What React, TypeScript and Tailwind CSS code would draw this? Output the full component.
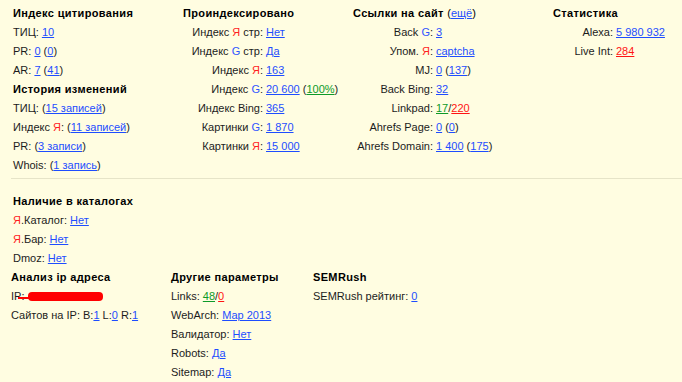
import React from 'react';

const Y = () => <span className="text-[#ff1f1f]">Я</span>;
const G = () => <span className="text-[#2f55ff]">G</span>;
const L = ({ children, c = 'blue' }: { children: React.ReactNode; c?: 'blue' | 'green' | 'red' }) => (
  <a
    href="#"
    className={
      c === 'green'
        ? 'text-[#0d9a28] underline'
        : c === 'red'
        ? 'text-[#ff1414] underline'
        : 'text-[#1e4dff] underline'
    }
  >
    {children}
  </a>
);

const Row = ({ children }: { children: React.ReactNode }) => (
  <div className="h-[19px] leading-[19px] whitespace-nowrap">{children}</div>
);
const H = ({ children }: { children: React.ReactNode }) => (
  <div className="h-[19px] leading-[19px] font-bold tracking-[0.35px] text-black whitespace-nowrap">{children}</div>
);

const KV = ({ w, label, children }: { w: string; label: React.ReactNode; children: React.ReactNode }) => (
  <div className="flex h-[19px] leading-[19px] whitespace-nowrap">
    <div className={`${w} text-right shrink-0`}>{label}</div>
    <div className="pl-[3px]">{children}</div>
  </div>
);

export default function App() {
  return (
    <div
      className="w-[682px] h-[382px] overflow-hidden bg-[#fffde1] text-[#1c1c1c] text-[11px]"
      style={{ fontFamily: '"Liberation Sans", Arial, sans-serif' }}
    >
      <div className="flex pt-[4px] pl-[13px]">
        <div className="w-[170px]">
          <H>Индекс цитирования</H>
          <Row>ТИЦ: <L>10</L></Row>
          <Row>PR: <L>0</L> (<L>0</L>)</Row>
          <Row>AR: <L>7</L> (<L>41</L>)</Row>
          <H>История изменений</H>
          <Row>ТИЦ: (<L>15 записей</L>)</Row>
          <Row>Индекс <Y />: (<L>11 записей</L>)</Row>
          <Row>PR: (<L>3 записи</L>)</Row>
          <Row>Whois: (<L>1 запись</L>)</Row>
        </div>
        <div className="w-[170px]">
          <H>Проиндексировано</H>
          <KV w="w-[80px]" label={<>Индекс <Y /> стр:</>}><L>Нет</L></KV>
          <KV w="w-[80px]" label={<>Индекс <G /> стр:</>}><L>Да</L></KV>
          <KV w="w-[80px]" label={<>Индекс <Y />:</>}><L>163</L></KV>
          <KV w="w-[80px]" label={<>Индекс <G />:</>}><L>20 600</L> (<L c="green">100%</L>)</KV>
          <KV w="w-[80px]" label="Индекс Bing:"><L>365</L></KV>
          <KV w="w-[80px]" label={<>Картинки <G />:</>}><L>1 870</L></KV>
          <KV w="w-[80px]" label={<>Картинки <Y />:</>}><L>15 000</L></KV>
        </div>
        <div className="w-[200px]">
          <H>Ссылки на сайт <span className="font-normal tracking-normal">(<L>ещё</L>)</span></H>
          <KV w="w-[80px]" label={<>Back <G />:</>}><L>3</L></KV>
          <KV w="w-[80px]" label={<>Упом. <Y />:</>}><L>captcha</L></KV>
          <KV w="w-[80px]" label="MJ:"><L>0</L> (<L>137</L>)</KV>
          <KV w="w-[80px]" label="Back Bing:"><L>32</L></KV>
          <KV w="w-[80px]" label="Linkpad:"><L c="green">17</L>/<L c="red">220</L></KV>
          <KV w="w-[80px]" label="Ahrefs Page:"><L>0</L> (<L>0</L>)</KV>
          <KV w="w-[80px]" label="Ahrefs Domain:"><L>1 400</L> (<L>175</L>)</KV>
        </div>
        <div className="w-[120px]">
          <H>Статистика</H>
          <KV w="w-[60px]" label="Alexa:"><L>5 980 932</L></KV>
          <KV w="w-[60px]" label="Live Int:"><L c="red">284</L></KV>
        </div>
      </div>

      <div className="ml-[11px] mt-[3px] border-t border-[#e6e4c8]" />

      <div className="pt-[13px] pl-[13px]">
        <H>Наличие в каталогах</H>
        <Row><Y />.Каталог: <L>Нет</L></Row>
        <Row><Y />.Бар: <L>Нет</L></Row>
        <Row>Dmoz: <L>Нет</L></Row>
      </div>

      <div className="flex pl-[11px]">
        <div className="w-[160px]">
          <H>Анализ ip адреса</H>
          <div className="relative h-[19px] leading-[19px] whitespace-nowrap">
            IP:
            {/* redacted address */}
            <span className="absolute left-[7px] top-[10px] w-[14px] h-[2px] bg-[#ff0000]" />
            <span className="absolute left-[17px] top-[5px] w-[75px] h-[9px] bg-[#ff0000] rounded-[4px]" />
          </div>
          <Row>Сайтов на IP: B:<L>1</L> L:<L>0</L> R:<L>1</L></Row>
        </div>
        <div className="w-[142px]">
          <H>Другие параметры</H>
          <Row>Links: <L c="green">48</L>/<L c="red">0</L></Row>
          <Row>WebArch: <L>Мар 2013</L></Row>
          <Row>Валидатор: <L>Нет</L></Row>
          <Row>Robots: <L>Да</L></Row>
          <Row>Sitemap: <L>Да</L></Row>
        </div>
        <div>
          <H>SEMRush</H>
          <Row>SEMRush рейтинг: <L>0</L></Row>
        </div>
      </div>
    </div>
  );
}
